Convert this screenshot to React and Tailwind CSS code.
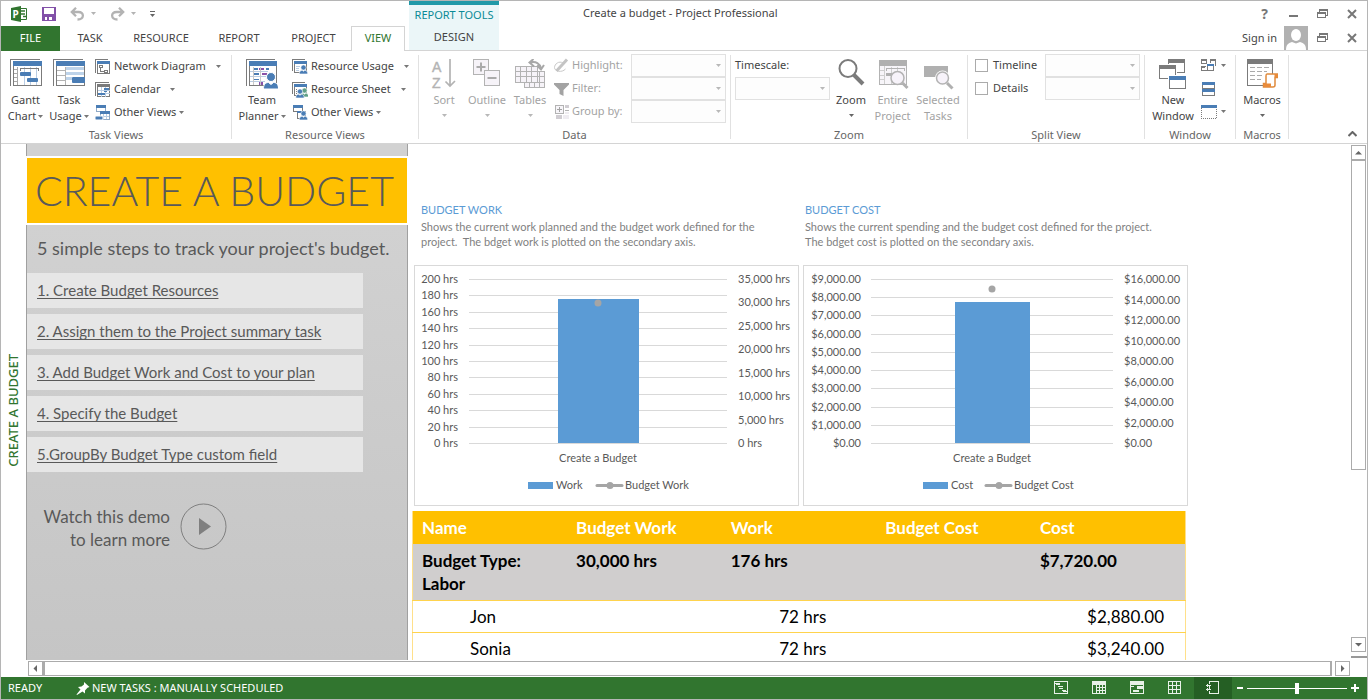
import { useState } from "react";

const steps = [
  "1. Create Budget Resources",
  "2. Assign them to the Project summary task",
  "3. Add Budget Work and Cost to your plan",
  "4. Specify the Budget",
  "5.GroupBy Budget Type custom field",
];

const workChart = {
  name: "Work",
  secondary: "Budget Work",
  left: ["200 hrs", "180 hrs", "160 hrs", "140 hrs", "120 hrs", "100 hrs", "80 hrs", "60 hrs", "40 hrs", "20 hrs", "0 hrs"],
  right: ["35,000 hrs", "30,000 hrs", "25,000 hrs", "20,000 hrs", "15,000 hrs", "10,000 hrs", "5,000 hrs", "0 hrs"],
  plot: { x1: 55, x2: 313, leftX: 44, rightX: 324 },
  bar: { x: 144, width: 81, value: 0.88 },
  dot: 0.855,
  legend: { x: 114, line: 183 },
};

const costChart = {
  name: "Cost",
  secondary: "Budget Cost",
  left: ["$9,000.00", "$8,000.00", "$7,000.00", "$6,000.00", "$5,000.00", "$4,000.00", "$3,000.00", "$2,000.00", "$1,000.00", "$0.00"],
  right: ["$16,000.00", "$14,000.00", "$12,000.00", "$10,000.00", "$8,000.00", "$6,000.00", "$4,000.00", "$2,000.00", "$0.00"],
  plot: { x1: 68, x2: 310, leftX: 58, rightX: 321 },
  bar: { x: 152, width: 75, value: 0.858 },
  dot: 0.94,
  legend: { x: 120, line: 183 },
};

/* ---------- small shared pieces ---------- */

function Caret({ className = "" }) {
  return (
    <svg width="5" height="3" viewBox="0 0 5 3" className={`shrink-0 ${className}`} fill="currentColor">
      <path d="M0 0h5L2.5 3z" />
    </svg>
  );
}

function Icon({ size = 16, children }) {
  return (
    <svg width={size} height={size} viewBox={`0 0 ${size} ${size}`} fill="none" className="shrink-0" aria-hidden="true">
      {children}
    </svg>
  );
}

function Combo({ label, id }) {
  return (
    <div className="relative h-[23px] w-[95px]">
      <select
        id={id}
        aria-label={label}
        disabled
        className="h-full w-full appearance-none border border-[#e1e1e1] bg-[#fdfdfd]"
      >
        <option></option>
      </select>
      <Caret className="pointer-events-none absolute right-[5px] top-[10px] text-[#b8b8b8]" />
    </div>
  );
}

function Group({ label, className = "", children }) {
  return (
    <section className={`flex shrink-0 flex-col ${className}`}>
      <div className="flex h-[76px] items-start">{children}</div>
      <h2 className="h-4 text-center leading-4 text-[#666]">{label}</h2>
    </section>
  );
}

function Separator() {
  return <div className="mt-1 h-[84px] w-px shrink-0 bg-[#e1e1e1]" />;
}

function BigButton({ icon, lines, caret, disabled, className = "" }) {
  const inline = caret && lines.length === 2;
  return (
    <button
      type="button"
      disabled={disabled}
      className={`flex shrink-0 flex-col items-center pt-2 leading-4 ${disabled ? "text-[#a3a3a3]" : "text-[#444]"} ${className}`}
    >
      {icon}
      <span className="mt-px whitespace-nowrap">{lines[0]}</span>
      {lines[1] && (
        <span className="flex items-center gap-0.5 whitespace-nowrap">
          {lines[1]}
          {inline && <Caret className="text-[#777]" />}
        </span>
      )}
      {caret && !inline && <Caret className={disabled ? "mt-1.5 text-[#b8b8b8]" : "mt-1.5 text-[#666]"} />}
    </button>
  );
}

function SmallButton({ icon, text, caretClass = "ml-2" }) {
  return (
    <button type="button" className="flex h-[23px] items-center whitespace-nowrap text-[#444]">
      {icon}
      <span className="ml-[3px]">{text}</span>
      <Caret className={`text-[#777] ${caretClass}`} />
    </button>
  );
}

/* ---------- icons ---------- */

const GanttIcon = (
  <Icon size={32}>
    <g shapeRendering="crispEdges">
      <path d="M.5 27V.5H30" stroke="#7b7b7b" />
      <path d="M3.5 2.5h28v24h-28z" fill="#fff" stroke="#7b7b7b" />
      <path d="M3 2h29v5H3z" fill="#4a7db5" />
      <path d="M7.5 8v18M4 10.5h3M4 14.5h3M4 18.5h3M4 22.5h3" stroke="#a8a8a8" />
      <path d="M14.5 8v18M20.5 8v18M26.5 8v18" stroke="#b9cde4" />
      <path d="M10.500 12V9.500h18V12" stroke="#7b7b7b" />
    </g>
    <rect x="10" y="13" width="11" height="4" rx="1" fill="#4a7db5" />
    <rect x="17" y="19" width="11" height="4" rx="1" fill="#4a7db5" />
  </Icon>
);

const TaskUsageIcon = (
  <Icon size={32}>
    <g shapeRendering="crispEdges">
      <path d="M.5 27V.5H30" stroke="#7b7b7b" />
      <path d="M3.5 2.5h28v24h-28z" fill="#fff" stroke="#7b7b7b" />
      <path d="M3 2h29v5H3z" fill="#4a7db5" />
      <path d="M4 11.5h8M4 16.5h8M4 21.5h8M12.5 8v18" stroke="#b3b3b3" />
      <path d="M13 8h18v3H13zM13 13h18v3H13zM13 18h6v3h-6z" fill="#bdd3ea" />
    </g>
    <rect x="19" y="18" width="13" height="6" rx="1" fill="#4a7db5" />
  </Icon>
);

const TeamPlannerIcon = (
  <Icon size={32}>
    <g shapeRendering="crispEdges">
      <path d="M.5 27V.5H29" stroke="#7b7b7b" />
      <path d="M3.5 2.5h27v24h-27z" fill="#fff" stroke="#7b7b7b" />
      <path d="M3 2h28v5H3z" fill="#4a7db5" />
      <path d="M8 9h4v2H8zM20 9h3v2h-3zM8 14h5v2H8zM8 20h5v1H8z" fill="#4a7db5" />
      <path d="M13 9h5v2h-5zM16 14h5v2h-5zM13 23h4v3h-4z" fill="#8a52a8" />
      <path d="M4 12.5h18M4 17.5h16M4 22.5h15" stroke="#b9cde4" />
      <path d="M14.5 8v18M7.5 8v18" stroke="#c9c9c9" />
    </g>
    <circle cx="25" cy="18" r="4.5" fill="#4a7db5" stroke="#fff" />
    <path d="M17.5 30c0-4 1.5-6.5 5-6.5l2.5 2 2.5-2c3.5 0 5 2.5 5 6.5z" fill="#4a7db5" stroke="#fff" />
  </Icon>
);

const SortIcon = (
  <Icon size={32}>
    <g fill="#b3b3b3" stroke="#b3b3b3" strokeWidth=".4" fontSize="14" fontFamily="Liberation Sans, sans-serif">
      <text x="4" y="13">A</text>
      <text x="4" y="29">Z</text>
    </g>
    <path d="M22 0v27M17.5 22.5L22 27l5-5" stroke="#b3b3b3" strokeWidth="1.7" />
  </Icon>
);

const OutlineIcon = (
  <Icon size={32}>
    <g shapeRendering="crispEdges" fill="#f6f3f8" stroke="#b3b3b3">
      <path d="M2.5.5h15v15h-15z" />
      <path d="M13.5 11.5h15v15h-15z" />
    </g>
    <path d="M10 3.5v9M5.5 8h9M16.5 19h9" stroke="#aaa" strokeWidth="2" />
  </Icon>
);

const TablesIcon = (
  <Icon size={32}>
    <g shapeRendering="crispEdges" fill="#f6f3f8" stroke="#b3b3b3">
      <path d="M10.5 12.5h20v16h-20z" />
      <path d="M15.5 12.5v16M20.5 12.5v16M25.5 12.5v16M10.5 17.5h20M10.5 23.5h20" />
      <path d="M1.5 7.5h22v16h-22z" />
      <path d="M6.5 7.5v16M12.5 7.5v16M17.5 7.5v16M1.5 12.5h22M1.5 17.5h22" />
    </g>
    <path d="M16 3.5c6-1.500 10 1 11 6M19.500 0L15.500 3.500l4.500 4M23 6.500l4 4 3-4.500" stroke="#a8a8a8" strokeWidth="2" />
  </Icon>
);

const ZoomIcon = (
  <Icon size={32}>
    <circle cx="13" cy="9.5" r="8.5" fill="#fff" stroke="#7b7b7b" strokeWidth="2" />
    <path d="M19 16l9 9" stroke="#7b7b7b" strokeWidth="4" />
  </Icon>
);

const EntireProjectIcon = (
  <Icon size={32}>
    <g shapeRendering="crispEdges">
      <path d="M2.5 1.5h27v24h-27z" fill="#f7f5f9" stroke="#b3b3b3" />
      <path d="M2 1h28v6H2z" fill="#b0b0b0" />
      <path d="M7.5 7v18M3 11.5h5M3 16.5h5M3 20.5h5M14.5 8v17M20.5 8v17" stroke="#cfcfcf" />
      <path d="M9.5 12V9.5h18V12" stroke="#b3b3b3" />
      <path d="M9 14h6v3H9z" fill="#b0b0b0" />
    </g>
    <circle cx="20.5" cy="19" r="6.5" fill="#f7f3fa" stroke="#b3b3b3" strokeWidth="1.5" />
    <path d="M25.5 24l5 5" stroke="#b0b0b0" strokeWidth="3" />
  </Icon>
);

const SelectedTasksIcon = (
  <Icon size={32}>
    <path d="M2 7h24v11H2z" fill="#b0b0b0" />
    <circle cx="20.5" cy="19" r="7.5" fill="#fff" />
    <circle cx="20.5" cy="19" r="6" fill="#f7f3fa" stroke="#b3b3b3" strokeWidth="1.5" />
    <path d="M25 24l5.500 5.500" stroke="#b0b0b0" strokeWidth="3" />
  </Icon>
);

const NewWindowIcon = (
  <Icon size={32}>
    <g shapeRendering="crispEdges" fill="#fff">
      <path d="M11.5.5h16v13h-16z" stroke="#7b7b7b" />
      <path d="M11 0h17v4H11z" fill="#7b7b7b" />
      <path d="M1 5h19v16H1z" />
      <path d="M2.5 6.5h16v13h-16z" stroke="#7b7b7b" />
      <path d="M2 6h17v4H2z" fill="#7b7b7b" />
      <path d="M11 16h18v15H11z" />
      <path d="M12.5 17.5h16v12h-16z" stroke="#7b7b7b" />
      <path d="M12 17h17v4H12z" fill="#4a7db5" />
    </g>
  </Icon>
);

const MacrosIcon = (
  <Icon size={32}>
    <g shapeRendering="crispEdges">
      <path d="M1.5.5h25v26h-25z" fill="#fff" stroke="#7b7b7b" />
      <path d="M1 0h26v5H1z" fill="#7b7b7b" />
      <path d="M4 8.5h5M11 8.5h5M18 8.5h5M4 12.5h5M11 12.5h5M18 12.5h3M4 16.5h5M11 16.5h5M4 20.5h5M11 20.5h4" stroke="#aaa" />
    </g>
    <path d="M21 15h10.5v3.5H29V26c0 1.5-1 2-2 2h-9.5v-3.500H20V17c0-1 0-2 1-2z" fill="#fff" stroke="#e08a3c" strokeWidth="1.5" />
    <path d="M17 24.5h8v3.5h-7zM28.5 15h3v3h-3z" fill="#e98b3a" />
  </Icon>
);

const NetworkIcon = (
  <Icon>
    <g shapeRendering="crispEdges">
      <path d="M.5 14V.5H13" stroke="#7b7b7b" />
      <path d="M2.5 2.5h12v12h-12z" fill="#fff" stroke="#7b7b7b" />
      <path d="M2 2h13v3H2z" fill="#4a7db5" />
      <path d="M4.5 6.5h3v2h-3zM9.5 11.5h3v2h-3zM5.5 9v3.5h4" stroke="#7b7b7b" />
    </g>
  </Icon>
);

const CalendarIcon = (
  <Icon>
    <g shapeRendering="crispEdges">
      <path d="M.5 14V.5H14" stroke="#7b7b7b" />
      <path d="M2.5 2.5h12v12h-12z" fill="#fff" stroke="#7b7b7b" />
      <path d="M2 2h13v3H2z" fill="#7b7b7b" />
      <path d="M6.5 5v10M10.5 5v10M3 8.5h12M3 11.5h12" stroke="#b9cde4" />
      <path d="M9 6h5v2H9zM3 11h7v2H3zM9 9h3v1H9z" fill="#4a7db5" />
    </g>
  </Icon>
);

const OtherTaskIcon = (
  <Icon>
    <g shapeRendering="crispEdges">
      <path d="M1.5.5h9v6h-9zM5.5 6.5h9v8h-9z" fill="#fff" stroke="#8fa9c6" />
      <path d="M1 0h10v3H1zM5 6h10v3H5z" fill="#4a7db5" />
      <path d="M8.5 9v5M11.5 9v5M6 11.5h8" stroke="#b9cde4" />
    </g>
    <rect x="0" y="11" width="8" height="4" rx="1" fill="#4a7db5" stroke="#fff" />
  </Icon>
);

function Person({ x, y, color }) {
  return (
    <g fill={color} stroke="#fff" strokeWidth=".6">
      <circle cx={x} cy={y} r="2.6" />
      <path d={`M${x - 4.2} ${y + 6.5}c0-2.5 1-3.7 3-3.7l1.2 1 1.2-1c2 0 3 1.2 3 3.7z`} />
    </g>
  );
}

const ResourceUsageIcon = (
  <Icon>
    <g shapeRendering="crispEdges">
      <path d="M.5 12V.5H13" stroke="#7b7b7b" />
      <path d="M2.5 2.5h12v11h-12z" fill="#fff" stroke="#7b7b7b" />
      <path d="M2 2h13v3H2z" fill="#4a7db5" />
      <path d="M4 7.5h4M4 9.5h3M4 11.5h3" stroke="#b9cde4" />
    </g>
    <Person x={11.5} y={8.5} color="#4a7db5" />
  </Icon>
);

const ResourceSheetIcon = (
  <Icon>
    <g shapeRendering="crispEdges">
      <path d="M.5 12V.5H13" stroke="#7b7b7b" />
      <path d="M2.5 2.5h12v11h-12z" fill="#fff" stroke="#7b7b7b" />
      <path d="M2 2h13v3H2z" fill="#4a7db5" />
      <path d="M4 7h1v1H4zM4 9h1v1H4zM4 11h1v1H4z" fill="#7b7b7b" />
    </g>
    <Person x={12.5} y={8.5} color="#5f9f86" />
    <Person x={8} y={9.5} color="#4a7db5" />
  </Icon>
);

const OtherResourceIcon = (
  <Icon>
    <g shapeRendering="crispEdges">
      <path d="M1.5.5h9v6h-9zM5.5 6.5h8v7h-8z" fill="#fff" stroke="#7b7b7b" />
      <path d="M1 0h10v3H1zM5 6h8v2H5z" fill="#4a7db5" />
    </g>
    <Person x={11.5} y={8.5} color="#4a7db5" />
  </Icon>
);

const HighlightIcon = (
  <Icon>
    <path d="M10 5C6 2.5 1.500 6 1.500 9.500c0 4 7.500 5.500 11 1.500" stroke="#c9c9c9" />
    <path d="M3.5 13L14 1.500" stroke="#c4c4c4" strokeWidth="3" />
  </Icon>
);

const FilterIcon = (
  <Icon>
    <path d="M1 2h15v1.5L10.500 9v6l-4-2V9L1 3.500z" fill="#a3a3a3" />
  </Icon>
);

const GroupByIcon = (
  <Icon>
    <g shapeRendering="crispEdges">
      <path d="M2.5 1.5h8v8h-8z" fill="#f7f5f9" stroke="#b3b3b3" />
      <path d="M6.5 3v5M4 5.5h5" stroke="#a3a3a3" />
      <path d="M12 1h4v3h-4zM3 11h6v4H3z" fill="#d0cdd2" />
      <path d="M12 6.5h4" stroke="#b3b3b3" />
      <path d="M10 11h6v4h-6zM12 8h4v2h-4z" fill="#efecf1" />
    </g>
  </Icon>
);

const SwitchWindowsIcon = (
  <Icon>
    <g shapeRendering="crispEdges" stroke="#7b7b7b">
      <path d="M.5 5.5v-4h5v4zM9.5 5V1.500h5v6h-1" />
      <path d="M0 2h6M9 2h6" strokeWidth="2" />
      <path d="M.5 12.500v-4h4M0 9h4M.500 12.500h5" />
      <path d="M6.500 6.500h6v6h-6z" fill="#fff" />
      <path d="M6 7h7" stroke="#4a7db5" strokeWidth="2" />
    </g>
  </Icon>
);

const ArrangeAllIcon = (
  <Icon>
    <g shapeRendering="crispEdges">
      <path d="M1.5 1.5h12v13h-12zM1.5 7.5h12" stroke="#7b7b7b" />
      <path d="M1 1h13v3H1zM1 8h13v3H1z" fill="#4a7db5" />
    </g>
  </Icon>
);

const HideIcon = (
  <Icon>
    <g shapeRendering="crispEdges">
      <path d="M0 1h16v3H0z" fill="#4a7db5" />
      <path d="M.5 4v10.500h15V4" stroke="#7b7b7b" strokeDasharray="1 1" />
    </g>
  </Icon>
);

const RestoreIcon = (
  <svg width="11" height="10" viewBox="0 0 11 10" fill="none" stroke="#777" shapeRendering="crispEdges">
    <path d="M2.5 3V.5h8v6H8.500M2 1.500h9" />
    <path d="M.5 3.5h8v5h-8zM.5 4.5h8" />
  </svg>
);

const CloseIcon = (
  <svg width="10" height="10" viewBox="0 0 10 10" fill="none" stroke="#777" strokeWidth="2">
    <path d="M1 1l8 8M9 1L1 9" />
  </svg>
);

/* ---------- header ---------- */

function WindowButton({ label, children }) {
  return (
    <button type="button" aria-label={label} className="flex h-6 w-[29px] items-center justify-center">
      {children}
    </button>
  );
}

const tabs = [
  { name: "TASK", width: "w-[60px]" },
  { name: "RESOURCE", width: "w-[82px]" },
  { name: "REPORT", width: "w-[74px]" },
  { name: "PROJECT", width: "w-[75px]" },
];

function Header() {
  return (
    <header className="flex h-[50px] shrink-0">
      <div className="w-[408px] shrink-0">
        <div className="flex h-[25px] items-center pl-2.5">
          <svg width="17" height="16" viewBox="0 0 17 16" aria-hidden="true">
            <path d="M8 2.5h7.5v11H8z" fill="#fff" stroke="#31752f" />
            <path d="M10 5h4M10 8h4M12 10.5h3" stroke="#31752f" strokeWidth="1.5" />
            <path d="M0 2l10-2v16L0 14z" fill="#31752f" />
            <text x="1.5" y="12" fontSize="10" fontWeight="700" fill="#fff" fontFamily="Noto Sans, sans-serif">P</text>
          </svg>
          <button type="button" aria-label="Save" className="ml-3.5">
            <svg width="14" height="14" viewBox="0 0 14 14" shapeRendering="crispEdges">
              <path d="M0 0h14v14H0z" fill="#8250a8" />
              <path d="M2 1h10v6H2zM3 10h2v3H3zM7 10h3v3H7z" fill="#fff" />
            </svg>
          </button>
          <button type="button" aria-label="Undo" className="ml-3.5 flex items-center gap-1.5 text-[#b3b3b3]">
            <svg width="15" height="14" viewBox="0 0 15 14" fill="none" stroke="currentColor" strokeWidth="2.3">
              <path d="M6 .8L1.800 5 6 9.200M2 5h6.500c6 0 6 7.500-1 7.500" />
            </svg>
            <Caret />
          </button>
          <button type="button" aria-label="Redo" className="ml-3.5 flex items-center gap-1.5 text-[#b3b3b3]">
            <svg width="15" height="14" viewBox="0 0 15 14" fill="none" stroke="currentColor" strokeWidth="2.3">
              <path d="M9 .8L13.200 5 9 9.200M13 5H6.500c-6 0-6 7.500 1 7.500" />
            </svg>
            <Caret />
          </button>
          <button type="button" aria-label="Customize Quick Access Toolbar" className="ml-3.5 flex flex-col items-center gap-0.5 text-[#666]">
            <span className="h-px w-[5px] bg-[#666]" />
            <Caret />
          </button>
        </div>
        <nav className="flex h-[25px] text-[#444]">
          <button type="button" className="w-[59px] bg-[#31752f] text-white">FILE</button>
          {tabs.map((t) => (
            <button key={t.name} type="button" className={`border-b border-[#d4d4d4] ${t.width}`}>
              {t.name}
            </button>
          ))}
          <button type="button" className="w-[54px] border-x border-t border-[#d4d4d4] pb-0.5 text-[#31752f]">VIEW</button>
          <div className="flex-1 border-b border-[#d4d4d4]" />
        </nav>
      </div>

      <div className="flex w-[90px] shrink-0 flex-col border-b border-t-4 border-b-[#d4d4d4] border-t-[#2199a8] bg-[#ebf6f8]">
        <span className="flex h-5 items-center justify-center whitespace-nowrap text-[#0a8a96]">REPORT TOOLS</span>
        <button type="button" className="h-[25px] text-[#444]">DESIGN</button>
      </div>

      <div className="flex min-w-0 flex-1 flex-col border-b border-[#d4d4d4]">
        <div className="flex h-[25px] items-center pr-px">
          <h1 className="flex-1 truncate pl-[84px] text-[#444]">Create a budget - Project Professional</h1>
          <WindowButton label="Help">
            <span className="text-sm font-bold text-[#777]">?</span>
          </WindowButton>
          <WindowButton label="Minimize">
            <span className="mt-1 h-0.5 w-[9px] bg-[#777]" />
          </WindowButton>
          <WindowButton label="Restore Down">{RestoreIcon}</WindowButton>
          <WindowButton label="Close">{CloseIcon}</WindowButton>
        </div>
        <div className="flex h-6 items-center justify-end pr-px text-[#444]">
          <a href="#signin" className="mr-[7px]">Sign in</a>
          <svg width="24" height="24" viewBox="0 0 24 24" aria-hidden="true">
            <path d="M0 0h24v24H0z" fill="#b1b1b1" />
            <ellipse cx="12" cy="9" rx="5" ry="6" fill="#fff" />
            <path d="M2 24c0-5 2-7 6-8l4 1.5 4-1.5c4 1 6 3 6 8z" fill="#fff" />
          </svg>
          <WindowButton label="Restore project window">{RestoreIcon}</WindowButton>
          <WindowButton label="Close project">{CloseIcon}</WindowButton>
        </div>
      </div>
    </header>
  );
}

/* ---------- ribbon ---------- */

function DataRow({ icon, label, id }) {
  return (
    <div className="flex h-[23px] items-center">
      {icon}
      <label htmlFor={id} className="w-[62px] whitespace-nowrap pl-[3px] text-[#a3a3a3]">{label}</label>
      <Combo id={id} />
    </div>
  );
}

function SplitRow({ label, id }) {
  return (
    <div className="flex h-[23px] items-center">
      <input id={id} type="checkbox" className="h-[13px] w-[13px] appearance-none border border-[#ababab] bg-white" />
      <label htmlFor={id} className="w-[57px] pl-[5px] text-[#444]">{label}</label>
      <Combo label={`${label} view`} />
    </div>
  );
}

function Ribbon() {
  return (
    <div className="flex h-[93px] shrink-0 border-b border-[#d4d4d4]">
      <Group label="Task Views" className="w-[230px]">
        <BigButton icon={GanttIcon} lines={["Gantt", "Chart"]} caret className="ml-[3px] w-[43px]" />
        <BigButton icon={TaskUsageIcon} lines={["Task", "Usage"]} caret className="w-11" />
        <div className="ml-1 pt-1">
          <SmallButton icon={NetworkIcon} text="Network Diagram" caretClass="ml-2.5" />
          <SmallButton icon={CalendarIcon} text="Calendar" caretClass="ml-2.5" />
          <SmallButton icon={OtherTaskIcon} text="Other Views" caretClass="ml-[3px]" />
        </div>
      </Group>
      <Separator />
      <Group label="Resource Views" className="w-[186px]">
        <BigButton icon={TeamPlannerIcon} lines={["Team", "Planner"]} caret className="ml-[5px] w-[50px]" />
        <div className="ml-[5px] pt-1">
          <SmallButton icon={ResourceUsageIcon} text="Resource Usage" caretClass="ml-2.5" />
          <SmallButton icon={ResourceSheetIcon} text="Resource Sheet" caretClass="ml-2.5" />
          <SmallButton icon={OtherResourceIcon} text="Other Views" caretClass="ml-[3px]" />
        </div>
      </Group>
      <Separator />
      <Group label="Data" className="w-[311px]">
        <BigButton icon={SortIcon} lines={["Sort"]} caret disabled className="ml-[5px] w-10" />
        <BigButton icon={OutlineIcon} lines={["Outline"]} caret disabled className="w-[46px]" />
        <BigButton icon={TablesIcon} lines={["Tables"]} caret disabled className="w-10" />
        <div className="ml-[3px] pt-[3px]">
          <DataRow icon={HighlightIcon} label="Highlight:" id="highlight" />
          <DataRow icon={FilterIcon} label="Filter:" id="filter" />
          <DataRow icon={GroupByIcon} label="Group by:" id="group-by" />
        </div>
      </Group>
      <Separator />
      <Group label="Zoom" className="w-[236px]">
        <div className="ml-1 w-[97px] pt-[3px]">
          <label htmlFor="timescale" className="flex h-[23px] items-center text-[#444]">Timescale:</label>
          <Combo id="timescale" />
        </div>
        <BigButton icon={ZoomIcon} lines={["Zoom"]} caret className="w-[38px]" />
        <BigButton icon={EntireProjectIcon} lines={["Entire", "Project"]} disabled className="w-[45px]" />
        <BigButton icon={SelectedTasksIcon} lines={["Selected", "Tasks"]} disabled className="w-[46px]" />
      </Group>
      <Separator />
      <Group label="Split View" className="w-[176px]">
        <div className="ml-[7px] pt-[3px]">
          <SplitRow label="Timeline" id="timeline" />
          <SplitRow label="Details" id="details" />
        </div>
      </Group>
      <Separator />
      <Group label="Window" className="w-[90px]">
        <BigButton icon={NewWindowIcon} lines={["New", "Window"]} className="ml-[3px] w-[50px]" />
        <div className="ml-[3px] pt-[3px] text-[#777]">
          <button type="button" aria-label="Switch Windows" className="flex h-[23px] items-center gap-1">
            {SwitchWindowsIcon}
            <Caret />
          </button>
          <button type="button" aria-label="Arrange All" className="flex h-[23px] items-center">
            {ArrangeAllIcon}
          </button>
          <button type="button" aria-label="Hide" className="flex h-[23px] items-center gap-1">
            {HideIcon}
            <Caret />
          </button>
        </div>
      </Group>
      <Separator />
      <Group label="Macros" className="w-[52px]">
        <BigButton icon={MacrosIcon} lines={["Macros"]} caret className="w-[52px]" />
      </Group>
      <Separator />
      <div className="flex flex-1 items-end justify-end pb-1.5 pr-2.5">
        <button type="button" aria-label="Collapse the Ribbon">
          <svg width="9" height="6" viewBox="0 0 9 6" fill="none" stroke="#666" strokeWidth="2">
            <path d="M.5 5l4-4 4 4" />
          </svg>
        </button>
      </div>
    </div>
  );
}

/* ---------- report ---------- */

function Sidebar() {
  return (
    <aside className="flex w-[382px] shrink-0 flex-col font-['Lato','Liberation_Sans',sans-serif] text-[#595959]">
      <div className="h-3 shrink-0 border-x border-[#a0a0a0] bg-[#d2d2d2]" />
      <h2 className="mx-px my-0.5 flex h-[65px] shrink-0 items-center whitespace-nowrap bg-[#ffc000] pl-2 text-[41px] font-light leading-none">
        CREATE A BUDGET
      </h2>
      <div className="flex flex-1 flex-col border-x border-[#a0a0a0] bg-linear-to-b from-[#d1d1d1] to-[#c5c5c5]">
        <p className="mt-2.5 whitespace-nowrap pl-2.5 text-lg leading-[26px]">
          5 simple steps to track your project's budget.
        </p>
        <ul className="mt-3 flex w-[336px] flex-col gap-1.5">
          {steps.map((s) => (
            <li key={s} className="flex h-[35px] items-center bg-[#e6e6e6] pl-2.5 text-[15px]">
              <a href="#step" className="underline underline-offset-2">{s}</a>
            </li>
          ))}
        </ul>
        <div className="mt-[29px] flex items-center gap-2.5 pl-3">
          <p className="w-[131px] pt-1 text-right text-[17px] leading-[23px]">
            Watch this demo
            <br />
            to learn more
          </p>
          <button type="button" aria-label="Play demo">
            <svg width="47" height="47" viewBox="0 0 47 47">
              <circle cx="23.5" cy="23.5" r="22.5" fill="none" stroke="#7f7f7f" />
              <path d="M19 15v17l12-8.5z" fill="#7f7f7f" />
            </svg>
          </button>
        </div>
      </div>
    </aside>
  );
}

function Chart({ data }) {
  const top = 14;
  const height = 164;
  const bottom = top + height;
  const { plot, bar, legend } = data;
  const center = bar.x + Math.floor(bar.width / 2);
  const barHeight = Math.round(height * bar.value);
  const dotY = bottom - Math.round(height * data.dot);
  const at = (i, list) => top + Math.round((i * height) / (list.length - 1));

  return (
    <svg
      width="385"
      height="241"
      viewBox="0 0 385 241"
      className="shrink-0 font-['Lato','Liberation_Sans',sans-serif] text-[11px]"
      fill="#595959"
      role="img"
      aria-label={`${data.name} chart`}
    >
      <rect x=".5" y=".5" width="384" height="240" fill="#fff" stroke="#d9d9d9" />
      {data.left.map((t, i) => (
        <g key={t}>
          <path d={`M${plot.x1} ${at(i, data.left) + 0.5}H${plot.x2}`} stroke="#d9d9d9" />
          <text x={plot.leftX} y={at(i, data.left) + 4} textAnchor="end">{t}</text>
        </g>
      ))}
      {data.right.map((t, i) => (
        <text key={t} x={plot.rightX} y={at(i, data.right) + 4}>{t}</text>
      ))}
      <rect x={bar.x} y={bottom - barHeight} width={bar.width} height={barHeight} fill="#5b9bd5" />
      <circle cx={center} cy={dotY} r="3.5" fill="#a5a5a5" />
      <text x={center} y={bottom + 19} textAnchor="middle">Create a Budget</text>

      <rect x={legend.x} y="217" width="25" height="7" fill="#5b9bd5" />
      <text x={legend.x + 28} y="224">{data.name}</text>
      <path d={`M${legend.line} 220.5h25`} stroke="#a5a5a5" strokeWidth="3" strokeLinecap="round" />
      <circle cx={legend.line + 13} cy="220.5" r="3.5" fill="#a5a5a5" />
      <text x={legend.line + 28} y="224">{data.secondary}</text>
    </svg>
  );
}

function BudgetTable() {
  const columns = ["Name", "Budget Work", "Work", "Budget Cost", "Cost"];
  const rows = [
    { name: "Jon", work: "72 hrs", cost: "$2,880.00" },
    { name: "Sonia", work: "72 hrs", cost: "$3,240.00" },
  ];
  return (
    <table className="ml-1 mt-[5px] w-[774px] table-fixed border-collapse border-x border-[#ffe08a] text-left text-[17px] leading-[23px] text-black">
      <thead>
        <tr className="h-[33px] bg-[#ffc000] text-white">
          {columns.map((c) => (
            <th key={c} className="pl-[9px] font-bold">{c}</th>
          ))}
        </tr>
      </thead>
      <tbody>
        <tr className="h-14 border-b border-[#ffd34d] bg-[#d0cece] align-top font-bold">
          <td className="pl-[9px] pt-[5px]">Budget Type: Labor</td>
          <td className="pl-[9px] pt-[5px]">30,000 hrs</td>
          <td className="pl-[9px] pt-[5px]">176 hrs</td>
          <td></td>
          <td className="pl-[9px] pt-[5px]">$7,720.00</td>
        </tr>
        {rows.map((r) => (
          <tr key={r.name} className="h-8 border-b border-[#ffd34d]">
            <td className="pl-[57px]">{r.name}</td>
            <td></td>
            <td className="pr-[50px] text-right">{r.work}</td>
            <td></td>
            <td className="pr-[21px] text-right">{r.cost}</td>
          </tr>
        ))}
      </tbody>
    </table>
  );
}

function Report() {
  return (
    <div className="min-w-0 flex-1 overflow-hidden pt-[58px] font-['Lato','Liberation_Sans',sans-serif]">
      <div className="flex pl-[13px] text-[11px] leading-[15px] text-[#7f7f7f]">
        <div className="w-96 shrink-0">
          <h3 className="text-[#5b9bd5]">BUDGET WORK</h3>
          <p className="mt-0.5 whitespace-pre">
            {"Shows the current work planned and the budget work defined for the\nproject.  The bdget work is plotted on the secondary axis."}
          </p>
        </div>
        <div className="w-96 shrink-0">
          <h3 className="text-[#5b9bd5]">BUDGET COST</h3>
          <p className="mt-0.5 whitespace-pre">
            {"Shows the current spending and the budget cost defined for the project.\nThe bdget cost is plotted on the secondary axis."}
          </p>
        </div>
      </div>
      <div className="mt-4 flex gap-1 pl-1.5">
        <Chart data={workChart} />
        <Chart data={costChart} />
      </div>
      <BudgetTable />
    </div>
  );
}

/* ---------- scroll bars and status bar ---------- */

function ScrollArrow({ label, d, className = "" }) {
  return (
    <button
      type="button"
      aria-label={label}
      className={`flex h-[15px] w-[15px] shrink-0 items-center justify-center border border-[#ababab] bg-white ${className}`}
    >
      <svg width="7" height="7" viewBox="0 0 7 7" fill="#666">
        <path d={d} />
      </svg>
    </button>
  );
}

const viewIcons = [
  { label: "Gantt Chart", d: "M.5 1.5h13v12H.5zM2 4.5h4M4 6.500h5M5 8.500h4M8 10.500h4M9 11.500h4M1 3.500h5" },
  { label: "Task Usage", d: "M0 1.500h14M0 2.500h14M0 3.500h14M0 4.500h14M.5 5v8.500h13V5M4.500 5v9M7.500 5v9M10.500 5v9M5 7.500h9M5 10.500h9" },
  { label: "Team Planner", d: "M.5 1.5h13v12H.5zM0 2.500h14M0 3.500h14M0 4.500h14M1 6.500h3M7 6.500h7M7 7.500h7M7 8.500h7M3 10.500h6M3 11.500h6" },
  { label: "Resource Sheet", d: "M.5 1.500h12v12H.5zM4.500 1v13M8.500 1v13M0 5.500h13M0 9.500h13" },
  { label: "Report", d: "M3.500 4V1.500h9v12h-9V11M0 5.500h5M0 9.500h5M3.500 6v3M1.500 4v3M1.500 8v3" },
];

function StatusBar() {
  const [zoom, setZoom] = useState(50);
  return (
    <footer className="flex h-[22px] shrink-0 items-center bg-[#31752f] text-white">
      <span className="w-[75px] pl-[7px]">READY</span>
      <svg width="14" height="13" viewBox="0 0 14 13" fill="#fff" aria-hidden="true">
        <path d="M8 0l5.5 5-2 .8L9 8.5v3L6.5 9.5 1 13l-.5-.5L4.500 7.500 2 5l3.500-.5L8 2.500z" />
      </svg>
      <span className="ml-0.5 flex-1 truncate">NEW TASKS : MANUALLY SCHEDULED</span>
      {viewIcons.map((v) => (
        <button
          key={v.label}
          type="button"
          aria-label={v.label}
          className={`flex h-full w-[38px] items-center justify-center ${v.label === "Report" ? "bg-[#255f24]" : ""}`}
        >
          <svg width="14" height="16" viewBox="0 0 14 16" fill="none" stroke="#e8f1e8" shapeRendering="crispEdges">
            <path d={v.d} />
          </svg>
        </button>
      ))}
      <button type="button" aria-label="Zoom Out" className="flex h-full w-[15px] items-center pl-[5px]">
        <span className="h-0.5 w-1.5 bg-white" />
      </button>
      <input
        type="range"
        aria-label="Zoom"
        value={zoom}
        onChange={(e) => setZoom(Number(e.target.value))}
        className="h-[11px] w-[100px] appearance-none bg-[linear-gradient(#fff,#fff)] bg-[length:100%_1px] bg-center bg-no-repeat [&::-webkit-slider-thumb]:h-[11px] [&::-webkit-slider-thumb]:w-1 [&::-webkit-slider-thumb]:appearance-none [&::-webkit-slider-thumb]:bg-white"
      />
      <button type="button" aria-label="Zoom In" className="flex h-full w-5 items-center pl-1">
        <svg width="8" height="8" viewBox="0 0 8 8" fill="#fff">
          <path d="M3 0h2v3h3v2H5v3H3V5H0V3h3z" />
        </svg>
      </button>
    </footer>
  );
}

export default function App() {
  return (
    <div className="flex h-screen flex-col overflow-hidden border border-[#b5b5b5] bg-white font-['Noto_Sans','Liberation_Sans',sans-serif] text-[11px]">
      <Header />
      <Ribbon />
      <main className="flex min-h-0 flex-1">
        <div className="flex w-[25px] shrink-0 items-center justify-center">
          <span className="rotate-180 whitespace-nowrap text-[13px] font-medium text-[#31752f] [writing-mode:vertical-rl]">
            CREATE A BUDGET
          </span>
        </div>
        <div className="flex min-w-0 flex-1 flex-col">
          <div className="flex min-h-0 flex-1">
            <Sidebar />
            <Report />
            <div className="flex w-4 shrink-0 flex-col pt-px">
              <ScrollArrow label="Scroll up" d="M0 5.5h7L3.5 2z" />
              <div className="h-[310px] w-[15px] border border-[#ababab] bg-white" />
              <div className="w-[15px] flex-1" />
              <ScrollArrow label="Scroll down" d="M0 2h7L3.5 5.5z" />
              <div className="mb-0.5 mt-1 h-0.5 bg-[#999]" />
            </div>
          </div>
          <div className="flex h-[17px] shrink-0 items-center pl-0.5 pr-[17px]">
            <ScrollArrow label="Scroll left" d="M5 0v7L1.5 3.5z" />
            <div className="h-[15px] flex-1 border-x-2 border-y border-[#ababab] bg-white" />
            <ScrollArrow label="Scroll right" d="M2 0v7l3.5-3.5z" className="ml-[3px]" />
          </div>
        </div>
      </main>
      <StatusBar />
    </div>
  );
}
